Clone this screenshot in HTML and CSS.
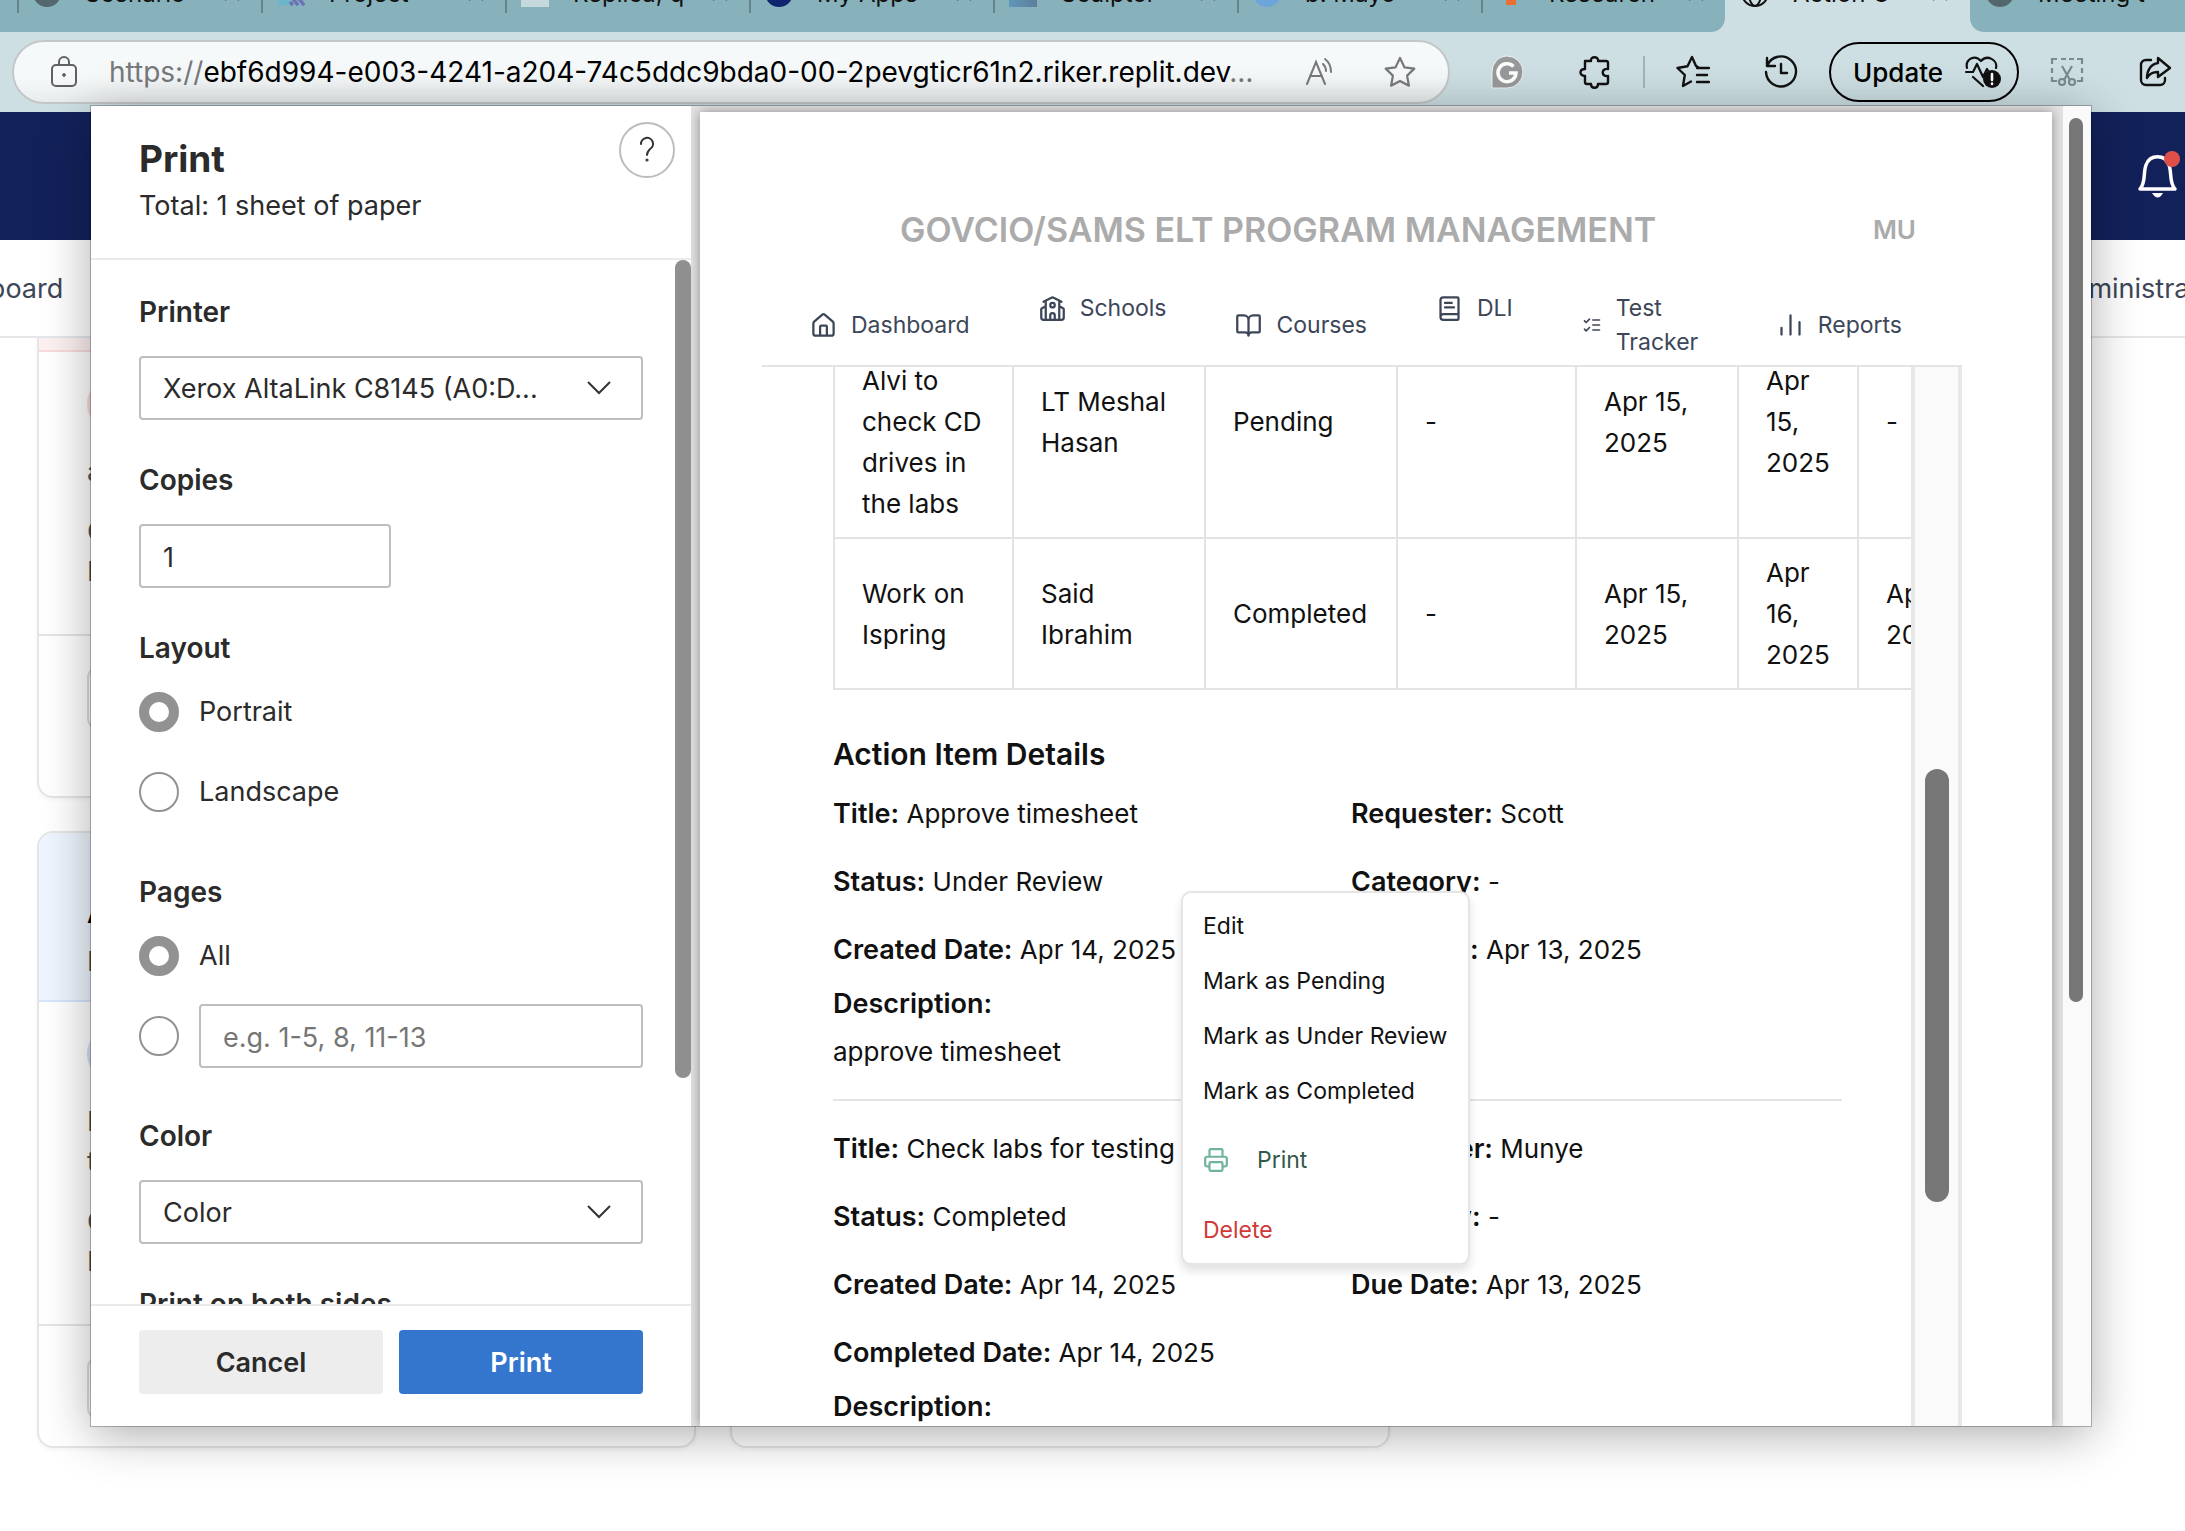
FILE: index.html
```html
<!DOCTYPE html>
<html lang="en">
<head>
<meta charset="utf-8">
<title>Print</title>
<link rel="stylesheet" href="styles.css">
</head>
<body>
<div class="window">
  <header class="tabstrip">
    <div class="tab-group tab-group-left">
      <div class="tab"><i class="fav fav-gray"></i><span>Scenario</span><svg class="x" viewBox="0 0 18 18"><path d="M2 2l14 14M16 2L2 16"/></svg></div>
      <div class="tab"><svg class="fav-svg" viewBox="0 0 32 28"><path d="M0 28L8 6l8 22z" fill="#6bb6cc"/><path d="M15 8l16 20M15 16l9 12M22 8l9 11M15 24l3 4" stroke="#6b72b8" stroke-width="4"/></svg><span>Project</span><svg class="x" viewBox="0 0 18 18"><path d="M2 2l14 14M16 2L2 16"/></svg></div>
      <div class="tab"><i class="fav fav-pale"></i><span>Replica, q</span><svg class="x" viewBox="0 0 18 18"><path d="M2 2l14 14M16 2L2 16"/></svg></div>
      <div class="tab"><i class="fav fav-navy"></i><span>My Apps</span><svg class="x" viewBox="0 0 18 18"><path d="M2 2l14 14M16 2L2 16"/></svg></div>
      <div class="tab"><i class="fav fav-photo"></i><span>Sculptor</span><svg class="x" viewBox="0 0 18 18"><path d="M2 2l14 14M16 2L2 16"/></svg></div>
      <div class="tab"><i class="fav fav-sky"></i><span>b. Mayo</span><svg class="x" viewBox="0 0 18 18"><path d="M2 2l14 14M16 2L2 16"/></svg></div>
      <div class="tab"><i class="fav fav-orange"></i><span>Research</span><svg class="x" viewBox="0 0 18 18"><path d="M2 2l14 14M16 2L2 16"/></svg></div>
    </div>
    <div class="tab-active"><div class="tab tab-plain"><svg class="fav-svg" viewBox="0 0 28 28" fill="none" stroke="#111" stroke-width="2"><circle cx="14" cy="14" r="13"/><ellipse cx="14" cy="14" rx="6" ry="13"/><path d="M2 19h24M2 9h24"/></svg><span>Action C</span><svg class="x" viewBox="0 0 18 18"><path d="M2 2l14 14M16 2L2 16"/></svg></div></div>
    <div class="tab-group tab-group-right"><div class="tab tab-plain"><i class="fav fav-gray"></i><span>Meeting t</span></div></div>
  </header>

  <div class="toolbar">
    <div class="address">
      <svg class="lock" viewBox="0 0 26 32" fill="none" stroke="#5f6163" stroke-width="2"><rect x="1" y="9" width="24" height="21" rx="4"/><path d="M8 9V6a5 5 0 0 1 10 0v3"/><circle cx="13" cy="19" r="1.4" fill="#5f6163" stroke-width="1"/></svg>
      <span class="url"><span class="dim">https://</span>ebf6d994-e003-4241-a204-74c5ddc9bda0-00-2pevgticr61n2.riker.replit.dev<span class="dim">…</span></span>
      <svg class="read" viewBox="0 0 32 30" fill="none" stroke="#77797b" stroke-width="2" stroke-linecap="round"><path d="M2 27L11 5l9 22M5 19h12M18 7c2 2 3 4 3 7M20 2c4 3 6 8 6 13"/></svg>
      <svg class="star" viewBox="0 0 34 34" fill="none" stroke="#77797b" stroke-width="2.2" stroke-linejoin="round"><path d="M17 3l4.400 9.300 9.900 1.300-7.200 7 1.800 10.100L17 26l-8.900 4.700 1.800-10.100-7.200-7 9.900-1.300z"/></svg>
    </div>
    <div class="tools">
      <div class="pair">
        <svg viewBox="0 0 34 34"><path d="M17 1a16 16 0 1 1 0 32H2V17A15.500 15.500 0 0 1 17 1z" fill="#97999b" stroke="#eef4f5"/><path d="M23.500 11.500A9 9 0 1 0 26 18h-7" fill="none" stroke="#fff" stroke-width="3.500"/></svg>
        <svg viewBox="0 0 34 34" fill="none" stroke="#111" stroke-width="2.400" stroke-linejoin="round"><path d="M7 6h6c-1-5 8-5 7 0h8a2 2 0 0 1 2 2v6c-7-1-7 8 0 7v6a2 2 0 0 1-2 2h-8c0 5-7 5-7 0H9a2 2 0 0 1-2-2v-6c-6 0-6-7 0-7z"/></svg>
      </div>
      <i class="divider"></i>
      <div class="pair">
        <svg viewBox="0 0 34 34" fill="none" stroke="#111" stroke-width="2.400" stroke-linejoin="round" stroke-linecap="round"><path d="M22 12l-2-1-4-9-4.500 9.300L1.500 13l7.300 7L7 31l8-4.500M21 13h12M21 20h10M21 27h12"/></svg>
        <svg viewBox="0 0 34 34" fill="none" stroke="#111" stroke-width="2.400" stroke-linecap="round" stroke-linejoin="round"><path d="M3 11A15 15 0 1 1 2 17M3 3v8h8M17 9v9h6"/></svg>
      </div>
      <button class="update" type="button">Update
        <svg viewBox="0 0 40 34" fill="none" stroke="#111" stroke-width="2.200" stroke-linecap="round" stroke-linejoin="round"><path d="M4 13C2 4 12-1 18 6c6-7 17-1 15 7M3 17h7l4-8 6 13 4-8 2 3h3M10 22l10 9"/><circle cx="29" cy="24" r="9" fill="#111" stroke="none"/><path d="M29 19v6M29 28.500v.5" stroke="#fff" stroke-width="2.600"/></svg>
      </button>
      <div class="pair">
        <svg viewBox="0 0 34 34" fill="none" stroke="#7b8a8e" stroke-width="2.200"><path d="M2 9V4h5M11 4h5M19 4h5M27 4h5v5M32 13v5M32 22v4h-5M2 13v5M2 22v4h5M12 11l8 14M22 11l-8 14"/><circle cx="12" cy="27" r="3"/><circle cx="22" cy="27" r="3"/></svg>
        <svg viewBox="0 0 34 34" fill="none" stroke="#111" stroke-width="2.400" stroke-linecap="round" stroke-linejoin="round"><path d="M13 5H8a5 5 0 0 0-5 5v15a5 5 0 0 0 5 5h14a5 5 0 0 0 5-5v-2M20 3l12 10-12 9v-5c-5 0-9 2-11 6 0-8 4-14 11-15z"/></svg>
      </div>
    </div>
  </div>

  <div class="app-bar">
    <svg class="bell" viewBox="0 0 44 50"><path d="M4 38c6-6 3-16 6-24 4-11 19-11 23 0 3 8 0 18 6 24z" fill="none" stroke="#fff" stroke-width="3.500" stroke-linejoin="round"/><path d="M16 42h11q-5 9-11 0z" fill="#fff"/><circle cx="36" cy="8" r="8" fill="#df4f4a"/></svg>
  </div>
  <nav class="app-nav"><div><a href="#">Dashboard</a><a href="#">Administration</a></div></nav>
  <main class="cards">
    <article class="card card-cut">
      <div class="card-head head-red"></div>
      <div class="card-body"><i class="avatar avatar-red"></i><p>a</p><p>C<br>I</p></div>
      <div class="card-foot"><i class="ghost"></i></div>
    </article>
    <article class="card card-cut"></article>
    <article class="card">
      <div class="card-head head-blue"><b>A</b><p>I</p></div>
      <div class="card-body"><i class="avatar avatar-blue"></i><p>I<br>t</p><p>C<br>I</p></div>
      <div class="card-foot"><i class="ghost"></i></div>
    </article>
    <article class="card"></article>
  </main>

  <section class="dialog" role="dialog" aria-label="Print">
    <form class="settings">
      <div class="settings-head">
        <div><h1>Print</h1><p>Total: 1 sheet of paper</p></div>
        <button class="help" type="button" aria-label="Help"><svg viewBox="0 0 20 28" fill="none" stroke="#333" stroke-width="2" stroke-linecap="round"><path d="M4 8a6 6 0 1 1 9 5c-2 2-3 3-3 6"/><circle cx="10" cy="24" r=".6" fill="#333"/></svg></button>
      </div>
      <div class="settings-body">
        <div class="field">
          <label for="printer">Printer</label>
          <div class="select"><select id="printer"><option>Xerox AltaLink C8145 (A0:D...</option></select><svg viewBox="0 0 24 14"><path d="M1 1l11 11L23 1"/></svg></div>
        </div>
        <div class="field">
          <label for="copies">Copies</label>
          <input class="box copies" id="copies" type="text" value="1">
        </div>
        <fieldset class="choices">
          <legend>Layout</legend>
          <div class="choice"><input type="radio" name="layout" id="portrait" checked><label for="portrait">Portrait</label></div>
          <div class="choice"><input type="radio" name="layout" id="landscape"><label for="landscape">Landscape</label></div>
        </fieldset>
        <fieldset class="choices">
          <legend>Pages</legend>
          <div class="choice"><input type="radio" name="pages" id="all" checked><label for="all">All</label></div>
          <div class="choice"><input type="radio" name="pages" aria-label="Range"><input class="box" type="text" aria-label="Page range" placeholder="e.g. 1-5, 8, 11-13"></div>
        </fieldset>
        <div class="field">
          <label for="color">Color</label>
          <div class="select"><select id="color"><option>Color</option></select><svg viewBox="0 0 24 14"><path d="M1 1l11 11L23 1"/></svg></div>
        </div>
        <div class="field"><label>Print on both sides</label></div>
        <i class="thumb settings-thumb"></i>
      </div>
      <div class="settings-foot">
        <button type="button">Cancel</button>
        <button class="primary" type="button">Print</button>
      </div>
    </form>

    <div class="preview">
      <div class="page">
        <div class="page-title"><h2>GOVCIO/SAMS ELT PROGRAM MANAGEMENT</h2><span>MU</span></div>
        <nav class="page-nav">
          <a href="#"><svg viewBox="0 0 24 24"><path d="M15 21v-8a1 1 0 0 0-1-1h-4a1 1 0 0 0-1 1v8M3 10a2 2 0 0 1 .7-1.500l7-6a2 2 0 0 1 2.600 0l7 6A2 2 0 0 1 21 10v9a2 2 0 0 1-2 2H5a2 2 0 0 1-2-2z"/></svg>Dashboard</a>
          <a class="top" href="#"><svg viewBox="0 0 24 24"><path d="M14 22v-4a2 2 0 1 0-4 0v4M18 10l3.400 1.700a1 1 0 0 1 .6.900V20a2 2 0 0 1-2 2H4a2 2 0 0 1-2-2v-7.400a1 1 0 0 1 .6-.9L6 10M18 5v17M4 6l7-3.500a2 2 0 0 1 2 0L20 6M6 5v17"/><circle cx="12" cy="9" r="2"/></svg>Schools</a>
          <a href="#"><svg viewBox="0 0 24 24"><path d="M12 7v14M3 18a1 1 0 0 1-1-1V4a1 1 0 0 1 1-1h5a4 4 0 0 1 4 4 4 4 0 0 1 4-4h5a1 1 0 0 1 1 1v13a1 1 0 0 1-1 1h-6a3 3 0 0 0-3 3 3 3 0 0 0-3-3z"/></svg>Courses</a>
          <a class="top" href="#"><svg viewBox="0 0 24 24"><path d="M4 19.500v-15A2.500 2.500 0 0 1 6.500 2H19a1 1 0 0 1 1 1v18a1 1 0 0 1-1 1H6.500a1 1 0 0 1 0-5H20M8 11h8M8 7h6"/></svg>DLI</a>
          <a href="#"><svg class="small" viewBox="0 0 24 24"><path d="M3 17l2 2 4-4M3 7l2 2 4-4M13 6h8M13 12h8M13 18h8"/></svg><span class="wrapped">Test<br>Tracker</span></a>
          <a href="#"><svg viewBox="0 0 24 24"><path d="M4 20v-6M12 20V3M20 20V9"/></svg>Reports</a>
        </nav>
        <div class="page-body">
          <div class="report">
            <div class="table-clip">
              <table>
                <colgroup><col class="c1"><col class="c2"><col class="c2"><col class="c1"><col class="c3"><col class="c4"><col class="c3"></colgroup>
                <tbody>
                  <tr><td><br>Alvi to<br>check CD<br>drives in<br>the labs</td><td>LT Meshal<br>Hasan</td><td>Pending</td><td>-</td><td>Apr 15,<br>2025</td><td>Apr<br>15,<br>2025</td><td>-</td></tr>
                  <tr><td>Work on<br>Ispring</td><td>Said<br>Ibrahim</td><td>Completed</td><td>-</td><td>Apr 15,<br>2025</td><td>Apr<br>16,<br>2025</td><td>Apr<br>2025</td></tr>
                </tbody>
              </table>
            </div>
            <div class="details">
              <h3>Action Item Details</h3>
              <section class="item">
                <div class="item-grid">
                  <p><b>Title:</b> Approve timesheet</p><p><b>Requester:</b> Scott</p>
                  <p><b>Status:</b> Under Review</p><p><b>Category:</b> -</p>
                  <p><b>Created Date:</b> Apr 14, 2025</p><p><b>Due Date:</b> Apr 13, 2025</p>
                </div>
                <p class="desc"><b>Description:</b></p>
                <p class="desc-text">approve timesheet</p>
              </section>
              <section class="item">
                <div class="item-grid">
                  <p><b>Title:</b> Check labs for testing</p><p><b>Requester:</b> Munye</p>
                  <p><b>Status:</b> Completed</p><p><b>Category:</b> -</p>
                  <p><b>Created Date:</b> Apr 14, 2025</p><p><b>Due Date:</b> Apr 13, 2025</p>
                  <p><b>Completed Date:</b> Apr 14, 2025</p>
                </div>
                <p class="desc"><b>Description:</b></p>
              </section>
            </div>
          </div>
          <div class="inner-track"><i class="thumb inner-thumb"></i></div>
        </div>
        <div class="menu" role="menu">
          <button type="button" role="menuitem">Edit</button>
          <button type="button" role="menuitem">Mark as Pending</button>
          <button type="button" role="menuitem">Mark as Under Review</button>
          <button type="button" role="menuitem">Mark as Completed</button>
          <button class="print-item" type="button" role="menuitem"><svg viewBox="0 0 24 24"><path d="M6 18H4a2 2 0 0 1-2-2v-5a2 2 0 0 1 2-2h16a2 2 0 0 1 2 2v5a2 2 0 0 1-2 2h-2M6 9V3a1 1 0 0 1 1-1h10a1 1 0 0 1 1 1v6"/><rect x="6" y="14" width="12" height="8" rx="1"/></svg>Print</button>
          <button class="delete-item" type="button" role="menuitem">Delete</button>
        </div>
      </div>
    </div>
    <div class="outer-track"><i class="thumb outer-thumb"></i></div>
  </section>
</div>
</body>
</html>
```
FILE: styles.css
```css
* { box-sizing: border-box; }
body { margin: 0; font-family: Inter, "Liberation Sans", sans-serif; font-size: 27px; color: #111; background: #fff; }
h1, h2, h3, p, fieldset, legend { margin: 0; padding: 0; border: 0; }
button, input, select { font: inherit; color: inherit; }
a { color: inherit; text-decoration: none; }
i { display: block; flex: none; }
svg { flex: none; display: block; }
b { font-weight: 600; }

.window { position: relative; min-height: 100vh; overflow: hidden; }

/* Browser chrome */
.tabstrip { display: flex; height: 32px; background: #cddfe3; overflow: hidden; }
.tab-group { background: #88b2bb; display: flex; overflow: hidden; }
.tab-group-left { padding-left: 17px; border-radius: 0 0 14px 0; }
.tab-group-right { flex: 1; border-radius: 0 0 0 14px; }
.tab { display: flex; align-items: center; gap: 24px; width: 244px; height: 40px; margin-top: -27px; padding: 0 20px 0 14px; border-left: 2px solid #66868d; font-size: 24px; white-space: nowrap; }
.tab-plain { border-color: transparent; }
.tab-active { width: 245px; }
.tab span { flex: 1; }
.x { width: 18px; height: 18px; fill: none; stroke: #222; stroke-width: 2; }
.fav { width: 28px; height: 28px; border-radius: 14px; }
.fav-svg { width: 28px; height: 28px; }
.fav-gray { background: #52686d; }
.fav-pale { background: #c5d8dc; border-radius: 0; }
.fav-navy { background: #10256f; }
.fav-photo { background: linear-gradient(90deg, #6197b8, #5d7f9c); border-radius: 0; }
.fav-sky { background: #6ba5dc; }
.fav-orange { background: #ec6f35; border-radius: 0; width: 10px; height: 24px; margin: 0 9px; }

.toolbar { display: flex; align-items: center; gap: 40px; height: 80px; padding: 0 13px 0 12px; background: #cddfe3; }
.address { flex: 1; display: flex; align-items: center; height: 64px; padding: 0 31px 0 37px; border: 2px solid #c4c7c9; border-radius: 32px; background: linear-gradient(#f5f9fa 60%, #e9eced); min-width: 0; }
.lock { width: 26px; height: 32px; margin-right: 32px; }
.url { flex: 1; font-size: 28px; white-space: nowrap; color: #000; }
.dim { color: #76787a; }
.read { width: 32px; height: 30px; margin-right: 46px; }
.star { width: 34px; height: 34px; }
.tools, .pair { display: flex; align-items: center; }
.tools { gap: 31px; }
.pair { gap: 54px; }
.pair svg { width: 34px; height: 34px; }
.divider { width: 2px; height: 32px; background: #a5b3b7; }
.update { display: flex; align-items: center; justify-content: space-between; width: 190px; height: 60px; padding: 0 14px 0 22px; border: 2px solid #000; border-radius: 30px; background: none; color: #000; font-size: 26px; font-weight: 500; }
.update svg { width: 40px; height: 34px; }

/* Page behind the dialog */
.app-bar { display: flex; justify-content: flex-end; height: 128px; padding: 39px 5px 0; background: #13215b; }
.bell { width: 44px; height: 50px; }
.app-nav { height: 98px; border-bottom: 2px solid #e5e7eb; overflow: hidden; font-size: 27px; line-height: 98px; color: #3d4658; }
.app-nav div { display: flex; justify-content: space-between; margin: 0 -52px 0 -76px; }
.cards { display: grid; grid-template-columns: 659px 660px; gap: 33px 34px; padding-left: 37px; }
.card { display: flex; flex-direction: column; border: 2px solid #e5e5e5; border-radius: 16px; overflow: hidden; background: #fff; box-shadow: 0 2px 4px #0000000a; line-height: 40px; color: #555; }
.card-cut { border-top: 0; border-radius: 0 0 16px 16px; min-height: 460px; }
.card-head { border-bottom: 2px solid #f8dcdc; padding-left: 48px; }
.head-red { height: 14px; background: #fdf0f0; }
.head-blue { height: 169px; padding-top: 61px; background: #eef5fe; border-color: #d8e5fb; }
.head-blue b { display: block; margin-bottom: 8px; color: #000; }
.card-body { display: flex; flex-direction: column; gap: 20px; padding: 24px 48px 42px; border-bottom: 2px solid #e5e5e5; }
.avatar { width: 56px; height: 56px; border-radius: 28px; }
.avatar-red { background: #fadada; }
.avatar-blue { background: #d3e0fa; }
.card-foot { padding: 30px 48px 26px; }
.ghost { width: 160px; height: 64px; border: 2px solid #ddd; border-radius: 12px; }

/* Print dialog */
.dialog { position: absolute; inset: 106px 94px 105px 91px; display: flex; background: #fff; box-shadow: 0 0 0 1px #00000040, 0 8px 46px #00000055; overflow: hidden; }
.settings { display: flex; flex-direction: column; width: 600px; color: #2b2b2b; }
.settings-head { display: flex; justify-content: space-between; height: 154px; padding: 16px 16px 0 48px; border-bottom: 2px solid #eaeaea; }
.settings-head h1 { margin-top: 13px; font-size: 37px; line-height: 48px; font-weight: 700; }
.settings-head p { line-height: 46px; }
.help { display: flex; align-items: center; justify-content: center; width: 56px; height: 56px; padding: 0; border: 2px solid #bdbdbd; border-radius: 28px; background: none; }
.help svg { width: 20px; height: 28px; }
.settings-body { position: relative; flex: 1; min-height: 0; overflow: hidden; padding: 32px 48px 0; line-height: 40px; }
.field { display: flex; flex-direction: column; gap: 24px; margin-bottom: 40px; }
.field > label, legend { font-size: 28px; font-weight: 600; }
.choices { display: flex; flex-direction: column; gap: 16px; margin-bottom: 48px; }
legend { margin-bottom: 12px; }
.box, select { width: 100%; height: 64px; padding: 2px 22px 0; border: 2px solid #bebebe; border-radius: 4px; background: #fff; outline: 0; }
.copies { width: 252px; }
.box::placeholder { color: #767676; }
.select { display: grid; align-items: center; }
.select > * { grid-area: 1 / 1; }
select { appearance: none; }
.select svg { justify-self: end; width: 24px; height: 14px; margin-right: 32px; fill: none; stroke: #333; stroke-width: 2; pointer-events: none; }
.choice { display: flex; align-items: center; gap: 20px; height: 64px; }
input[type="radio"] { appearance: none; flex: none; width: 40px; height: 40px; margin: 0; border: 2px solid #929292; border-radius: 20px; background: #fff; }
input[type="radio"]:checked { border-width: 10px; }
.settings-foot { display: grid; grid-template-columns: 1fr 1fr; gap: 16px; padding: 24px 48px 32px; border-top: 2px solid #eaeaea; }
.settings-foot button { height: 64px; border: 0; border-radius: 4px; background: #ededed; font-weight: 600; }
.settings-foot .primary { background: #3476cd; color: #fff; }
.thumb { border-radius: 12px; background: #777; }
.settings-thumb { position: absolute; top: 0; right: 0; width: 16px; height: 78.400%; background: #8f8f8f; }

/* Preview sheet */
.preview { flex: 1; min-width: 0; padding: 6px 11px 0 9px; background: #e4e4e4; overflow: hidden; }
.page { position: relative; display: flex; flex-direction: column; height: 100%; padding: 93px 90px 0 62px; background: #fff; box-shadow: 0 0 12px #00000066; }
.page-title { display: flex; align-items: center; justify-content: space-between; height: 48px; margin-bottom: 38px; padding: 0 46px 0 138px; color: #ababab; }
.page-title h2 { font-size: 34px; font-weight: 600; white-space: nowrap; }
.page-title span { font-size: 26px; font-weight: 600; }
.page-nav { display: flex; gap: 69px; height: 76px; padding: 0 48px; border-bottom: 2px solid #e3e4e8; font-size: 23px; line-height: 34px; color: #3d4658; }
.page-nav a { display: flex; align-items: center; gap: 14px; height: 68px; }
.page-nav .top { height: 34px; }
.page-nav svg { width: 27px; height: 27px; fill: none; stroke: currentColor; stroke-width: 2; stroke-linecap: round; stroke-linejoin: round; }
.page-nav .small { width: 20px; height: 20px; }
.wrapped { width: 92px; }
.page-body { display: flex; flex: 1; min-height: 0; }
.report { flex: 1; min-width: 0; padding-left: 71px; overflow: hidden; font-size: 26px; line-height: 41px; }
.table-clip { overflow: hidden; }
table { table-layout: fixed; width: 1186px; margin-top: -63px; border-collapse: collapse; }
.c1 { width: 179px; }
.c2 { width: 192px; }
.c3 { width: 162px; }
.c4 { width: 120px; }
td { padding: 13px 27px; border: 2px solid #e3e3e3; vertical-align: middle; white-space: nowrap; }
.details { margin: 40px 69px 0 0; }
.details b { font-size: 27px; line-height: 40px; }
h3 { margin-bottom: 15px; font-size: 30px; line-height: 48px; font-weight: 600; }
.item + .item { margin-top: 27px; padding-top: 27px; border-top: 2px solid #e5e5e5; }
.item-grid { display: grid; grid-template-columns: 1fr 1fr; gap: 27px; }
.desc { margin-top: 13px; }
.desc-text { margin-top: 7px; }
.inner-track { width: 51px; padding: 402px 9px 0 10px; border: solid #e8e8e8; border-width: 0 4px; background: #fafafa; }
.inner-thumb { width: 24px; height: 433px; }
.outer-track { width: 28px; padding: 12px 0 0 6px; background: #fafafa; }
.outer-thumb { width: 14px; height: 67.600%; }

/* Row action menu */
.menu { position: absolute; left: 481px; top: 779px; width: 289px; padding: 5px 0 6px; border: 2px solid #e5e5e5; border-radius: 10px; background: #fff; box-shadow: 0 6px 10px #0000001f; }
.menu button { display: flex; align-items: center; gap: 28px; width: 100%; height: 55px; padding: 0 20px; border: 0; background: none; font-size: 23px; white-space: nowrap; }
.menu .print-item { height: 84px; color: #33594b; }
.menu svg { width: 26px; height: 26px; fill: none; stroke: #6fb39a; stroke-width: 2; stroke-linejoin: round; }
.menu .delete-item { color: #d03a36; }
```
